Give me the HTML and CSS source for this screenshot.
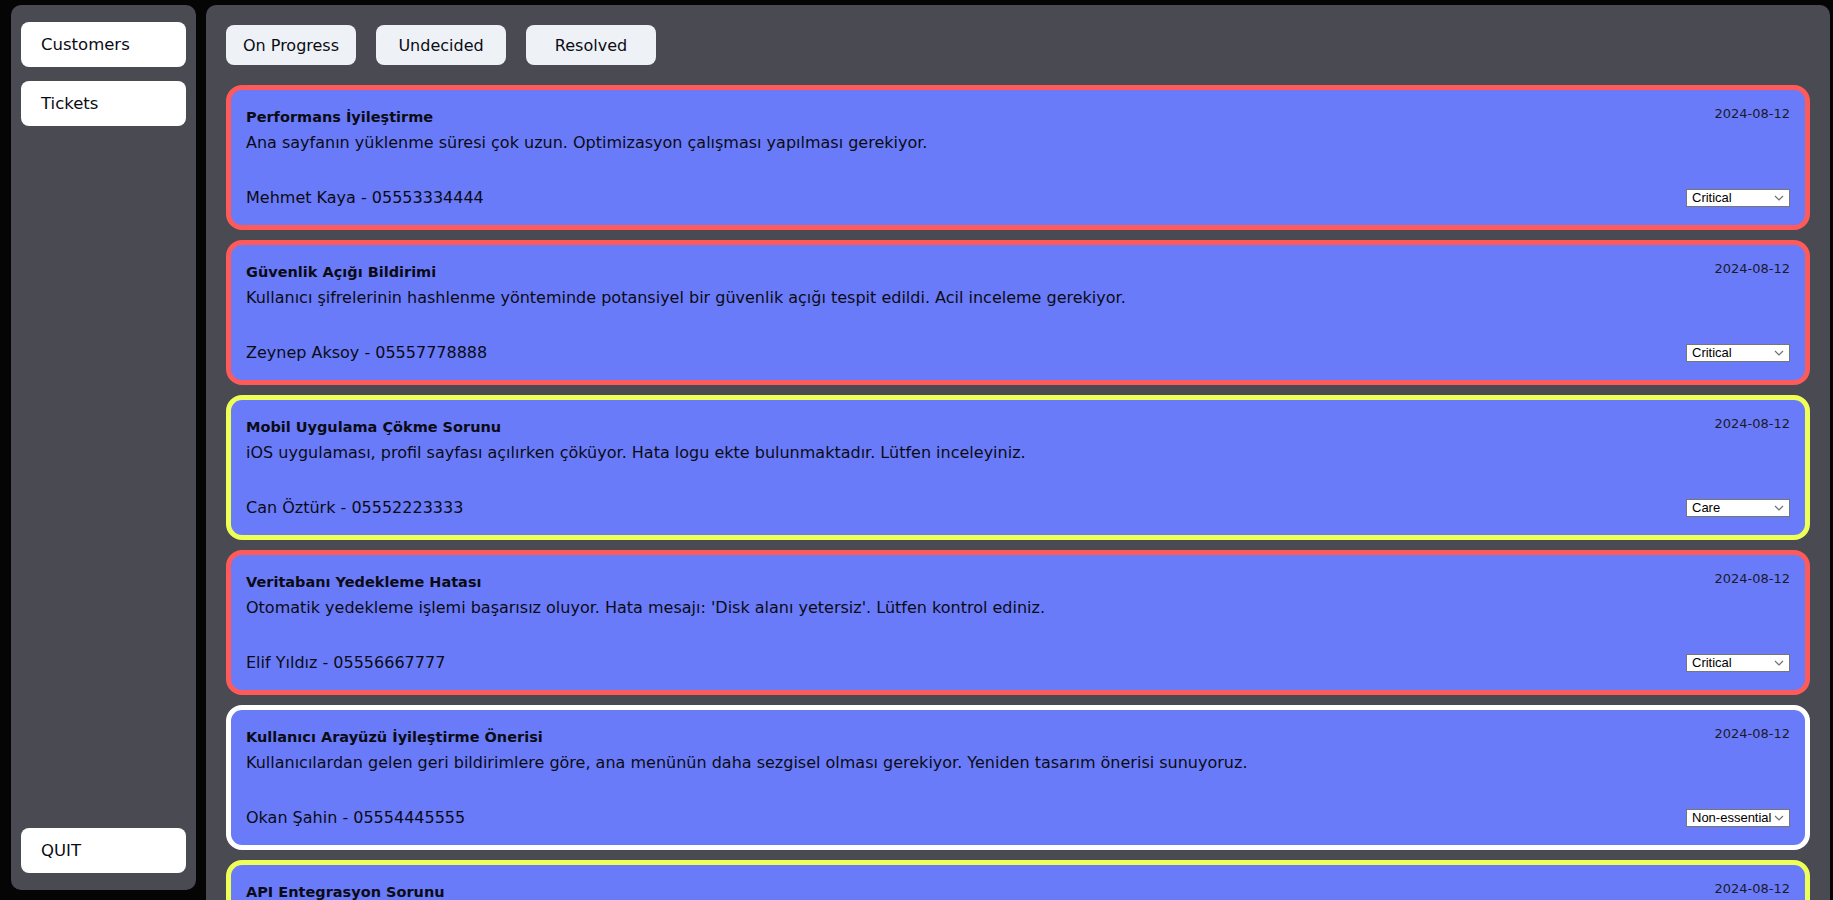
FILE: index.html
```html
<!DOCTYPE html>
<html lang="tr">
<head>
<meta charset="utf-8">
<title>Tickets</title>
<link rel="stylesheet" href="styles.css">
</head>
<body>
<div class="layout">
  <aside class="sidebar">
    <div class="nav">
      <button class="nav-btn">Customers</button>
      <button class="nav-btn">Tickets</button>
    </div>
    <button class="nav-btn">QUIT</button>
  </aside>
  <main class="main">
    <div class="tabs">
      <button class="tab">On Progress</button>
      <button class="tab">Undecided</button>
      <button class="tab">Resolved</button>
    </div>
    <div class="tickets">
      <div class="ticket critical">
        <div class="ticket-head"><h3 class="ticket-title">Performans İyileştirme</h3><span class="ticket-date">2024-08-12</span></div>
        <p class="ticket-desc">Ana sayfanın yüklenme süresi çok uzun. Optimizasyon çalışması yapılması gerekiyor.</p>
        <div class="ticket-foot"><span class="ticket-owner">Mehmet Kaya - 05553334444</span>
          <select class="priority"><option>Critical</option><option>Care</option><option>Non-essential</option></select></div>
      </div>
      <div class="ticket critical">
        <div class="ticket-head"><h3 class="ticket-title">Güvenlik Açığı Bildirimi</h3><span class="ticket-date">2024-08-12</span></div>
        <p class="ticket-desc">Kullanıcı şifrelerinin hashlenme yönteminde potansiyel bir güvenlik açığı tespit edildi. Acil inceleme gerekiyor.</p>
        <div class="ticket-foot"><span class="ticket-owner">Zeynep Aksoy - 05557778888</span>
          <select class="priority"><option>Critical</option><option>Care</option><option>Non-essential</option></select></div>
      </div>
      <div class="ticket care">
        <div class="ticket-head"><h3 class="ticket-title">Mobil Uygulama Çökme Sorunu</h3><span class="ticket-date">2024-08-12</span></div>
        <p class="ticket-desc">iOS uygulaması, profil sayfası açılırken çöküyor. Hata logu ekte bulunmaktadır. Lütfen inceleyiniz.</p>
        <div class="ticket-foot"><span class="ticket-owner">Can Öztürk - 05552223333</span>
          <select class="priority"><option>Care</option><option>Critical</option><option>Non-essential</option></select></div>
      </div>
      <div class="ticket critical">
        <div class="ticket-head"><h3 class="ticket-title">Veritabanı Yedekleme Hatası</h3><span class="ticket-date">2024-08-12</span></div>
        <p class="ticket-desc">Otomatik yedekleme işlemi başarısız oluyor. Hata mesajı: 'Disk alanı yetersiz'. Lütfen kontrol ediniz.</p>
        <div class="ticket-foot"><span class="ticket-owner">Elif Yıldız - 05556667777</span>
          <select class="priority"><option>Critical</option><option>Care</option><option>Non-essential</option></select></div>
      </div>
      <div class="ticket nonessential">
        <div class="ticket-head"><h3 class="ticket-title">Kullanıcı Arayüzü İyileştirme Önerisi</h3><span class="ticket-date">2024-08-12</span></div>
        <p class="ticket-desc">Kullanıcılardan gelen geri bildirimlere göre, ana menünün daha sezgisel olması gerekiyor. Yeniden tasarım önerisi sunuyoruz.</p>
        <div class="ticket-foot"><span class="ticket-owner">Okan Şahin - 05554445555</span>
          <select class="priority"><option>Non-essential</option><option>Critical</option><option>Care</option></select></div>
      </div>
      <div class="ticket care">
        <div class="ticket-head"><h3 class="ticket-title">API Entegrasyon Sorunu</h3><span class="ticket-date">2024-08-12</span></div>
        <p class="ticket-desc">Ödeme sistemi API'si ile entegrasyonda zaman aşımı hataları alınıyor.</p>
        <div class="ticket-foot"><span class="ticket-owner">Ayşe Demir - 05551112222</span>
          <select class="priority"><option>Care</option><option>Critical</option><option>Non-essential</option></select></div>
      </div>
    </div>
  </main>
</div>
</body>
</html>
```

FILE: styles.css
```css
* { box-sizing: border-box; }
html, body { margin: 0; height: 100%; }
body {
  background: #050505;
  font-family: "DejaVu Sans", "Open Sans", sans-serif;
  color: #0b0b14;
  overflow: hidden;
}
.layout {
  display: flex;
  align-items: flex-start;
  gap: 10px;
  padding: 5px 3px 10px 11px;
}
.sidebar {
  flex: 0 0 185px;
  height: 885px;
  background: #4a4a53;
  border-radius: 10px;
  padding: 17px 10px;
  display: flex;
  flex-direction: column;
  justify-content: space-between;
}
.nav { display: flex; flex-direction: column; gap: 14px; }
.nav-btn {
  height: 45px;
  width: 100%;
  border: none;
  border-radius: 8px;
  background: #ffffff;
  text-align: left;
  padding: 0 20px;
  font-family: inherit;
  font-size: 16.5px;
  color: #0b0b14;
}
.main {
  flex: 1;
  background: #4a4a53;
  border-radius: 10px;
  padding: 20px;
}
.tabs { display: flex; gap: 20px; margin-bottom: 20px; }
.tab {
  width: 130px;
  height: 40px;
  border: none;
  border-radius: 8px;
  background: #eef2f6;
  font-family: inherit;
  font-size: 16px;
  color: #0b0b14;
}
.tickets { display: flex; flex-direction: column; gap: 10px; }
.ticket {
  height: 145px;
  background: #6a7bfa;
  border: 5px solid #ff5a5a;
  border-radius: 16px;
  padding: 15px 15px;
  display: flex;
  flex-direction: column;
}
.ticket.care { border-color: #eeff57; }
.ticket.nonessential { border-color: #ffffff; }
.ticket-head { display: flex; justify-content: space-between; align-items: flex-start; }
.ticket-title { margin: 0; font-size: 14.5px; font-weight: 700; line-height: 24px; }
.ticket-date { font-size: 13px; line-height: 18px; color: #1a1a2a; }
.ticket-desc { margin: 2px 0 0; font-size: 16px; line-height: 24px; }
.ticket-foot {
  margin-top: auto;
  display: flex;
  justify-content: space-between;
  align-items: center;
  font-size: 16px;
  line-height: 24px;
}
.priority {
  -webkit-appearance: none;
  appearance: none;
  width: 104px;
  height: 18px;
  font-family: "Liberation Sans", Arial, sans-serif;
  font-size: 13px;
  line-height: 16px;
  background: #ffffff url("data:image/svg+xml,%3Csvg xmlns='http://www.w3.org/2000/svg' width='10' height='6' viewBox='0 0 10 6'%3E%3Cpath d='M1 1l4 4 4-4' fill='none' stroke='%23707070' stroke-width='1.2'/%3E%3C/svg%3E") no-repeat right 5px center;
  border: 1px solid #767676;
  border-radius: 0;
  padding: 0 16px 0 5px;
  color: #000;
}
```
